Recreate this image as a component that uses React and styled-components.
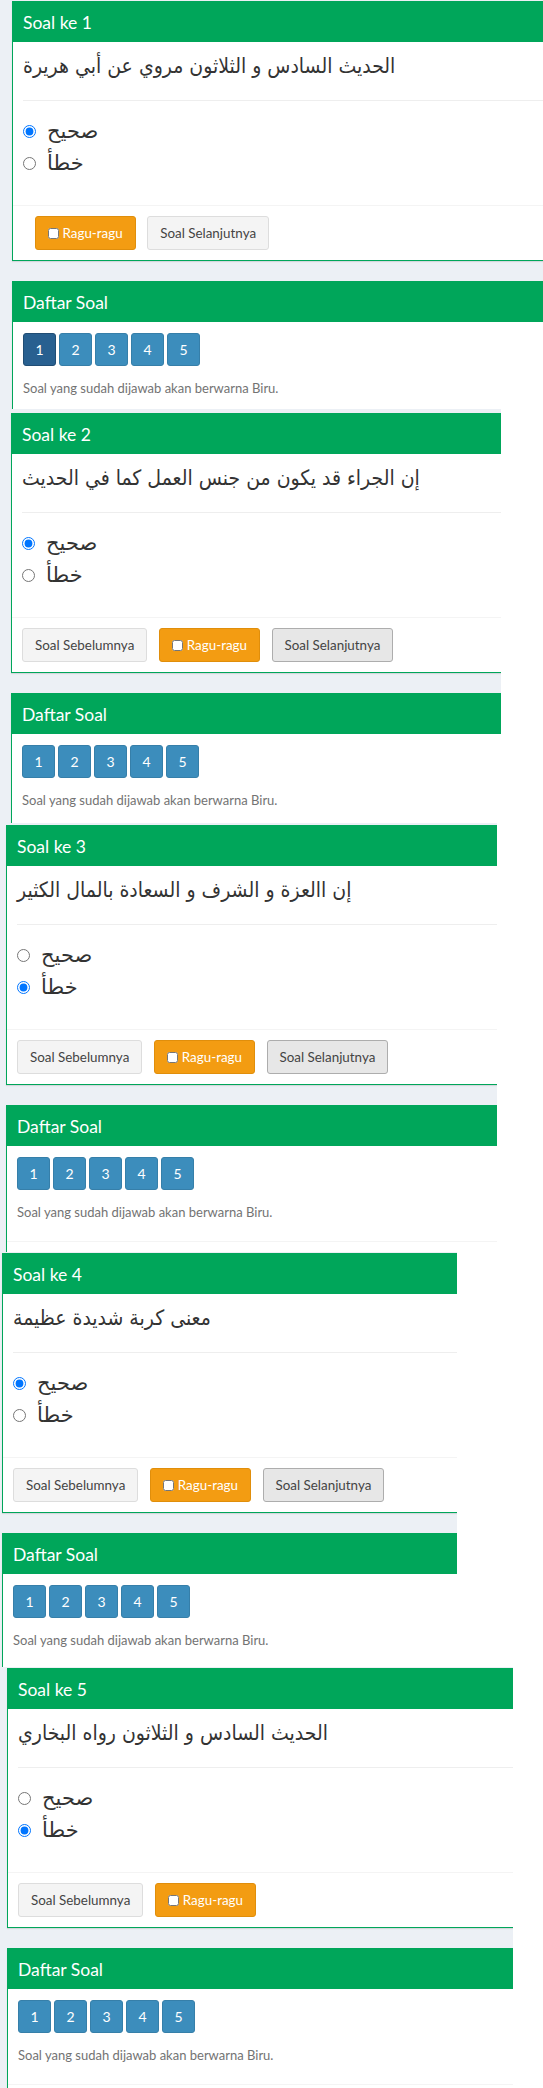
import React from 'react';
import styled, { createGlobalStyle } from 'styled-components';

const Global = createGlobalStyle`
  html, body { margin: 0; padding: 0; background: #fff; overflow-x: hidden; }
  body { font-family: Lato, "Liberation Sans", sans-serif; color: #333; }
  * { box-sizing: border-box; }
`;

const Slide = styled.section`
  width: ${(p) => p.$w}px;
  height: ${(p) => p.$h}px;
  padding: ${(p) => p.$pt}px 0 0 ${(p) => p.$pl}px;
  background: #ecf0f5;
  overflow: hidden;
`;

const Column = styled.div`
  width: 640px;
  display: flex;
  flex-direction: column;
  gap: 20px;
`;

const Box = styled.div`
  background: #fff;
  border: 1px solid #00a65a;
  box-shadow: 0 1px 1px rgba(0, 0, 0, 0.1);
`;

const BoxHeader = styled.div`
  height: 40px;
  background: #00a65a;
  color: #fff;
  display: flex;
  align-items: center;
  padding: 0 10px;
  font-size: 17.5px;
`;

const BoxBody = styled.div`
  padding: 10px;
`;

const Question = styled.div`
  font-family: "DejaVu Sans Condensed", "DejaVu Sans", sans-serif;
  font-size: 21px;
  line-height: 28px;
  height: 28px;
  color: #333;
`;

const Rule = styled.hr`
  margin: 20px 0 14px;
  border: 0;
  border-top: 1px solid #eee;
`;

const Options = styled.div`
  display: flex;
  flex-direction: column;
  margin-bottom: 16px;
`;

const Option = styled.label`
  height: 32px;
  display: flex;
  align-items: center;
  gap: 11px;
  font-family: "DejaVu Sans", sans-serif;
  font-size: 21px;
  color: #333;
  input { margin: 0; width: 13px; height: 13px; }
`;

const BoxFooter = styled.div`
  border-top: 1px solid #f4f4f4;
  padding: 10px;
  display: flex;
  gap: 11.5px;
  height: ${(p) => (p.$h ? `${p.$h}px` : 'auto')};
`;

const Spacer = styled.span`
  width: 0;
`;

const Button = styled.button`
  height: 34px;
  padding: 0 12px;
  font-family: inherit;
  font-size: 13.4px;
  border-radius: 3px;
  border: 1px solid ${(p) => (p.$tone === 'warn' ? '#e08e0b' : p.$tone === 'hover' ? '#adadad' : '#ddd')};
  background: ${(p) => (p.$tone === 'warn' ? '#f39c12' : p.$tone === 'hover' ? '#e7e7e7' : '#f4f4f4')};
  color: ${(p) => (p.$tone === 'warn' ? '#fff' : '#444')};
  display: inline-flex;
  align-items: center;
  gap: 4px;
  input { margin: 0; width: 11px; height: 11px; }
`;

const NumRow = styled.div`
  display: flex;
  gap: 3px;
  margin-top: 1px;
`;

const NumButton = styled.button`
  width: 33px;
  height: 33px;
  padding: 0;
  font-family: inherit;
  font-size: 14px;
  color: #fff;
  border-radius: 3px;
  border: 1px solid ${(p) => (p.$active ? '#204d74' : '#367fa9')};
  background: ${(p) => (p.$active ? '#286090' : '#3c8dbc')};
`;

const Help = styled.p`
  margin: 12px 0 9px;
  line-height: 20px;
  font-size: 13px;
  color: #737373;
`;

const slides = [
  { n: 1, q: 'الحديث السادس و الثلاثون مروي عن أبي هريرة', ans: 0, pt: 1, pl: 12, w: 543, h: 409, activeNum: true, next: 'normal' },
  { n: 2, q: 'إن الجراء قد يكون من جنس العمل كما في الحديث', ans: 0, pt: 4, pl: 11, w: 501, h: 414, next: 'hover', prev: true },
  { n: 3, q: 'إن االعزة و الشرف و السعادة بالمال الكثير', ans: 1, pt: 2, pl: 6, w: 497, h: 429, next: 'hover', prev: true },
  { n: 4, q: 'معنى كربة شديدة عظيمة', ans: 0, pt: 1, pl: 2, w: 457, h: 415, next: 'hover', prev: true },
  { n: 5, q: 'الحديث السادس و الثلاثون رواه البخاري', ans: 1, pt: 1, pl: 7, w: 513, h: 421, prev: true },
];

function QuestionBox({ s }) {
  return (
    <Box>
      <BoxHeader>Soal ke {s.n}</BoxHeader>
      <BoxBody>
        <Question>{s.q}</Question>
        <Rule />
        <Options>
          <Option>
            <input type="radio" name={`q${s.n}`} defaultChecked={s.ans === 0} />
            <span>صحيح</span>
          </Option>
          <Option>
            <input type="radio" name={`q${s.n}`} defaultChecked={s.ans === 1} />
            <span>خطأ</span>
          </Option>
        </Options>
      </BoxBody>
      <BoxFooter>
        {s.prev ? <Button>Soal Sebelumnya</Button> : <Spacer />}
        <Button $tone="warn">
          <input type="checkbox" />
          Ragu-ragu
        </Button>
        {s.next && <Button $tone={s.next}>Soal Selanjutnya</Button>}
      </BoxFooter>
    </Box>
  );
}

function ListBox({ active }) {
  return (
    <Box>
      <BoxHeader>Daftar Soal</BoxHeader>
      <BoxBody>
        <NumRow>
          {[1, 2, 3, 4, 5].map((i) => (
            <NumButton key={i} $active={active && i === 1}>{i}</NumButton>
          ))}
        </NumRow>
        <Help>Soal yang sudah dijawab akan berwarna Biru.</Help>
      </BoxBody>
      <BoxFooter $h={40} />
    </Box>
  );
}

export default function App() {
  return (
    <>
      <Global />
      {slides.map((s) => (
        <Slide key={s.n} $w={s.w} $h={s.h} $pt={s.pt} $pl={s.pl}>
          <Column>
            <QuestionBox s={s} />
            <ListBox active={s.activeNum} />
          </Column>
        </Slide>
      ))}
    </>
  );
}
